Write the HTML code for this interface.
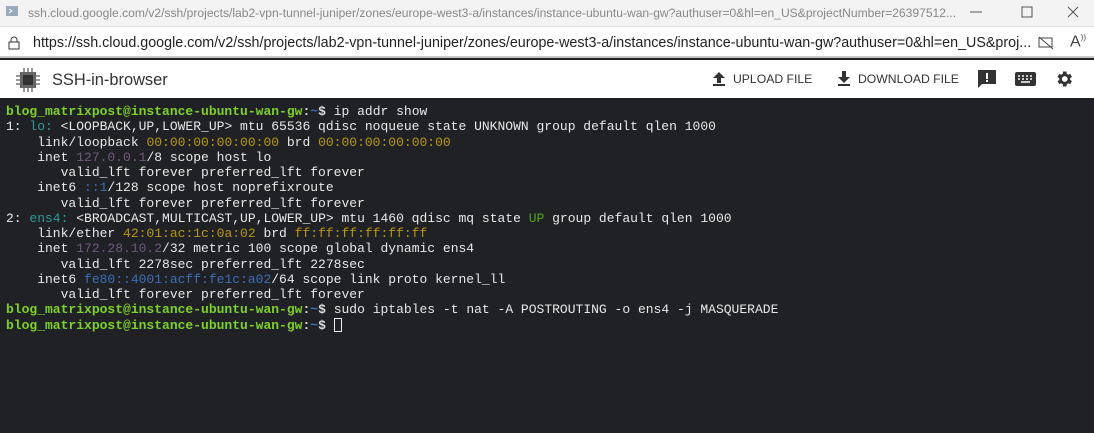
<!DOCTYPE html>
<html><head><meta charset="utf-8"><style>
*{margin:0;padding:0;box-sizing:border-box}
body{width:1094px;height:433px;overflow:hidden;background:#202124;font-family:"Liberation Sans",sans-serif;position:relative}
.title{position:absolute;left:0;top:0;width:1094px;height:27px;background:#f3f3f3;border-bottom:1px solid #e0e0e0}
.title .t{position:absolute;left:28px;top:6px;font-size:12.1px;color:#888;white-space:nowrap}
.addr{position:absolute;left:0;top:27px;width:1094px;height:31px;background:#fff;border-bottom:2px solid #c8c8c8}
.addr .u{position:absolute;left:33px;top:8px;font-size:14.3px;color:#222;white-space:nowrap}
.app{position:absolute;left:0;top:60px;width:1094px;height:38px;background:#fff}
.app .n{position:absolute;left:52px;top:11px;font-size:16.4px;color:#333}
.btn{position:absolute;top:12px;font-size:12.2px;color:#333;white-space:nowrap}
.term{position:absolute;left:6px;top:104px;font-family:"Liberation Mono",monospace;font-size:13px;line-height:15.25px;color:#e8e8e8;white-space:pre}
.p{color:#7ed321;font-weight:bold}.w{color:#ddd;font-weight:bold}
.c{color:#2a9d99}.y{color:#b8980a}.m{color:#6f5a7e}.b{color:#3b6fb8}.g{color:#4eaa06}
.cur{display:inline-block;width:8px;height:14px;border:1px solid #eee;vertical-align:-3px}
</style></head><body>
<div class="title">
<svg style="position:absolute;left:5px;top:5px" width="14" height="14"><rect x="1" y="1" width="12" height="10" fill="#9ab" /><path d="M4 4l3 2-3 2" stroke="#fff" fill="none"/></svg>
<div class="t">ssh.cloud.google.com/v2/ssh/projects/lab2-vpn-tunnel-juniper/zones/europe-west3-a/instances/instance-ubuntu-wan-gw?authuser=0&amp;hl=en_US&amp;projectNumber=26397512...</div>
<svg style="position:absolute;left:970px;top:6px" width="114" height="14"><path d="M0 6h12" stroke="#555"/><rect x="52" y="1" width="10" height="10" fill="none" stroke="#555"/><path d="M98 1l10 10M108 1l-10 10" stroke="#555"/></svg>
</div>
<div class="addr">
<svg style="position:absolute;left:8px;top:9px" width="12" height="14"><rect x="1" y="6" width="10" height="7" fill="none" stroke="#333"/><path d="M3 6V4a3 3 0 0 1 6 0v2" fill="none" stroke="#333"/></svg>
<div class="u">https://ssh.cloud.google.com/v2/ssh/projects/lab2-vpn-tunnel-juniper/zones/europe-west3-a/instances/instance-ubuntu-wan-gw?authuser=0&amp;hl=en_US&amp;proj...</div>
<svg style="position:absolute;left:1038px;top:9px" width="16" height="14"><rect x="1" y="2" width="13" height="9" fill="none" stroke="#444"/><path d="M1 1l14 12" stroke="#444"/></svg>
<div style="position:absolute;left:1070px;top:6px;font-size:16px;color:#444">A<sup style="font-size:8px">))</sup></div>
</div>
<div class="app">
<svg style="position:absolute;left:16px;top:8px" width="24" height="24"><rect x="4" y="4" width="16" height="16" fill="#666"/><rect x="7" y="7" width="10" height="10" fill="#333"/><path d="M8 0v4M12 0v4M16 0v4M8 20v4M12 20v4M16 20v4M0 8h4M0 12h4M0 16h4M20 8h4M20 12h4M20 16h4" stroke="#777" stroke-width="1.5"/></svg>
<div class="n">SSH-in-browser</div>
<svg style="position:absolute;left:713px;top:12px" width="12" height="14"><path d="M6 0L0 6h4v5h4V6h4z M0 12h12v2H0z" fill="#333"/></svg>
<div class="btn" style="left:733px">UPLOAD FILE</div>
<svg style="position:absolute;left:838px;top:11px" width="12" height="15"><path d="M4 0h4v6h4L6 12 0 6h4z M0 13h12v2H0z" fill="#333"/></svg>
<div class="btn" style="left:858px">DOWNLOAD FILE</div>
<svg style="position:absolute;left:978px;top:10px" width="18" height="19"><path d="M0 0h18v14H4l-4 4z" fill="#333"/><path d="M9 3v6M9 10v2" stroke="#fff" stroke-width="2"/></svg>
<svg style="position:absolute;left:1015px;top:12px" width="21" height="14"><rect width="21" height="14" rx="2" fill="#333"/><path d="M3 4h2M7 4h2M11 4h2M15 4h2M3 7h2M7 7h2M11 7h2M15 7h2M6 10h9" stroke="#fff" stroke-width="1.5"/></svg>
<svg style="position:absolute;left:1054px;top:9px" width="20" height="20" viewBox="0 0 24 24"><path fill="#333" d="M19.4 13a7.5 7.5 0 0 0 0-2l2.1-1.6-2-3.5-2.5 1a7 7 0 0 0-1.7-1L14.9 3h-4l-.4 2.9a7 7 0 0 0-1.7 1l-2.5-1-2 3.5L6.4 11a7.5 7.5 0 0 0 0 2l-2.1 1.6 2 3.5 2.5-1a7 7 0 0 0 1.7 1l.4 2.9h4l.4-2.9a7 7 0 0 0 1.7-1l2.5 1 2-3.5zM12.9 15.5a3.5 3.5 0 1 1 0-7 3.5 3.5 0 0 1 0 7z"/></svg>
</div>
<div class="term"><span class="p">blog_matrixpost@instance-ubuntu-wan-gw</span><span class="w">:</span><span class="b" style="font-weight:bold">~</span><span class="w">$</span> ip addr show
1: <span class="c">lo:</span> &lt;LOOPBACK,UP,LOWER_UP&gt; mtu 65536 qdisc noqueue state UNKNOWN group default qlen 1000
    link/loopback <span class="y">00:00:00:00:00:00</span> brd <span class="y">00:00:00:00:00:00</span>
    inet <span class="m">127.0.0.1</span>/8 scope host lo
       valid_lft forever preferred_lft forever
    inet6 <span class="b">::1</span>/128 scope host noprefixroute
       valid_lft forever preferred_lft forever
2: <span class="c">ens4:</span> &lt;BROADCAST,MULTICAST,UP,LOWER_UP&gt; mtu 1460 qdisc mq state <span class="g">UP</span> group default qlen 1000
    link/ether <span class="y">42:01:ac:1c:0a:02</span> brd <span class="y">ff:ff:ff:ff:ff:ff</span>
    inet <span class="m">172.28.10.2</span>/32 metric 100 scope global dynamic ens4
       valid_lft 2278sec preferred_lft 2278sec
    inet6 <span class="b">fe80::4001:acff:fe1c:a02</span>/64 scope link proto kernel_ll
       valid_lft forever preferred_lft forever
<span class="p">blog_matrixpost@instance-ubuntu-wan-gw</span><span class="w">:</span><span class="b" style="font-weight:bold">~</span><span class="w">$</span> sudo iptables -t nat -A POSTROUTING -o ens4 -j MASQUERADE
<span class="p">blog_matrixpost@instance-ubuntu-wan-gw</span><span class="w">:</span><span class="b" style="font-weight:bold">~</span><span class="w">$</span> <span class="cur"></span></div>
</body></html>
